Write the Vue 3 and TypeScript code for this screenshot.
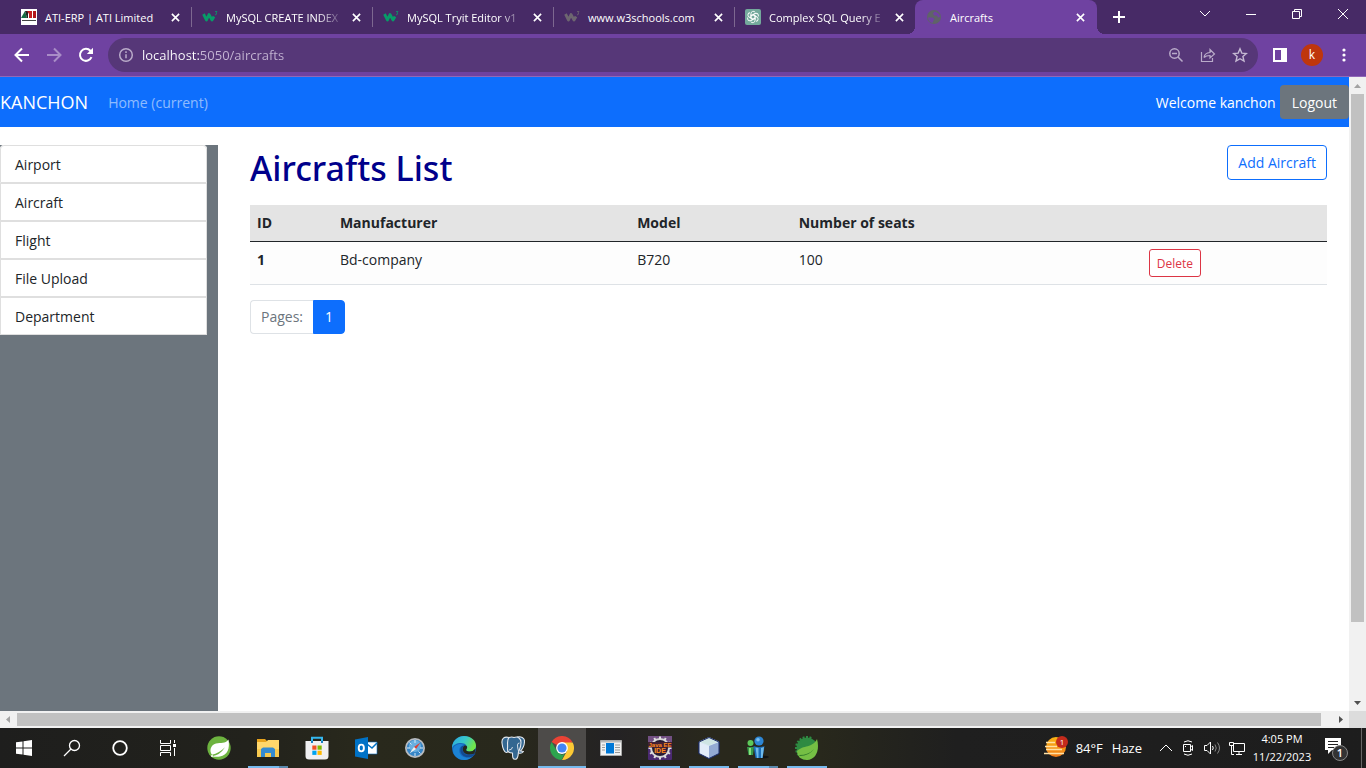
<script setup lang="ts">
import { ref } from 'vue'

interface Tab { title: string; icon: string; fade?: boolean; active?: boolean }
interface Aircraft { id: number; manufacturer: string; model: string; seats: number }
interface App { name: string; state?: string }

const tabs: Tab[] = [
  { title: 'ATI-ERP | ATI Limited', icon: 'ati' },
  { title: 'MySQL CREATE INDEX', icon: 'w3', fade: true },
  { title: 'MySQL Tryit Editor v1', icon: 'w3', fade: true },
  { title: 'www.w3schools.com', icon: 'w3gray' },
  { title: 'Complex SQL Query E', icon: 'gpt', fade: true },
  { title: 'Aircrafts', icon: 'globe', active: true },
]
const address = ref('localhost:5050/aircrafts')
const menu: string[] = ['Airport', 'Aircraft', 'Flight', 'File Upload', 'Department']
const aircrafts: Aircraft[] = [{ id: 1, manufacturer: 'Bd-company', model: 'B720', seats: 100 }]
const apps: App[] = [
  { name: 'spring' },
  { name: 'explorer', state: 'multi' },
  { name: 'store' },
  { name: 'outlook' },
  { name: 'safari' },
  { name: 'edge' },
  { name: 'postgres' },
  { name: 'chrome', state: 'active' },
  { name: 'window' },
  { name: 'javaee', state: 'open' },
  { name: 'netbeans', state: 'open' },
  { name: 'people', state: 'multi' },
  { name: 'sts', state: 'open' },
]
const teeth: number[] = Array.from({ length: 12 }, (_, i) => i * 30)
const fineTeeth: number[] = Array.from({ length: 12 }, (_, i) => 180 + i * 18)
const petals: number[] = [0, 60, 120, 180, 240, 300]
</script>

<template>
  <div class="desktop">
    <header class="tabstrip">
      <div class="tabs" role="tablist">
        <div v-for="(tab, i) in tabs" :key="i" class="tab" :class="{ active: tab.active }" role="tab">
          <svg v-if="tab.icon === 'ati'" class="fav" viewBox="0 0 16 16">
            <rect width="16" height="16" fill="#fff" />
            <path d="M0 9 4 2 6 9z" fill="#146b43" /><path d="M4 2H7V9H6z" fill="#222" />
            <path d="M6 2h5v7H8V5z" fill="#c41d20" /><path d="M12 2h3v7h-3z" fill="#b3161c" />
            <path d="M1 11.500h14" stroke="#444" />
          </svg>
          <svg v-else-if="tab.icon === 'w3' || tab.icon === 'w3gray'" class="fav" :class="tab.icon" viewBox="0 0 16 16">
            <path d="M1.500 5 4.500 11 7 5.500 10 11 12 7.500" fill="none" stroke="currentColor" stroke-width="2.800" stroke-linejoin="round" />
            <path d="M13 2.500h2l-1 1.500q2 1-1 2" fill="none" stroke="currentColor" stroke-width=".8" />
          </svg>
          <svg v-else-if="tab.icon === 'gpt'" class="fav" viewBox="0 0 16 16">
            <rect width="16" height="16" rx="2" fill="#74a99c" />
            <g fill="none" stroke="#fff" stroke-width=".9">
              <path v-for="a in petals" :key="a" :transform="`rotate(${a} 8 8)`" d="M6 9V4.500a2.300 2.300 0 0 1 4.200-1.200M8 5.600l3.500 2" />
            </g>
          </svg>
          <svg v-else class="fav" viewBox="0 0 16 16">
            <circle cx="8" cy="8" r="7" fill="#5f6368" />
            <path d="M2 8.500h4.500l2 1.500-1 1.500-1 2.500Q2.500 13 2 8.500M8.500 2.500 7 4.500 8 6.500h3l1 2 2-.5Q14 4 8.500 2.500" fill="#6f42a1" />
          </svg>
          <span class="title" :class="{ fade: tab.fade }">{{ tab.title }}</span>
          <button class="plain close" aria-label="Close tab">
            <svg width="9" height="9" viewBox="0 0 10 10"><path d="m1 1 8 8M9 1 1 9" stroke="currentColor" stroke-width="1.800" /></svg>
          </button>
        </div>
      </div>
      <button class="plain newtab" aria-label="New tab">
        <svg width="14" height="14" viewBox="0 0 14 14"><path d="M7 1v12M1 7h12" stroke="currentColor" stroke-width="2" /></svg>
      </button>
      <div class="wincontrols">
        <button class="plain" aria-label="Search tabs"><svg width="12" height="12" viewBox="0 0 12 12"><path d="m1 3 5 5 5-5" /></svg></button>
        <button class="plain" aria-label="Minimize"><svg width="12" height="12" viewBox="0 0 12 12"><path d="M1 6.500h10" /></svg></button>
        <button class="plain" aria-label="Restore"><svg width="12" height="12" viewBox="0 0 12 12"><path d="M1.500 3.500h7v7h-7zM3.500 3.500v-2h7v7h-2" /></svg></button>
        <button class="plain" aria-label="Close"><svg width="12" height="12" viewBox="0 0 12 12"><path d="m1 1 10 10M11 1 1 11" /></svg></button>
      </div>
    </header>

    <nav class="toolbar">
      <button class="plain cell" aria-label="Back"><svg width="16" height="16" viewBox="0 0 16 16"><path d="M15 8H2M8 1.500 1.500 8 8 14.500" fill="none" stroke="#fff" stroke-width="2" /></svg></button>
      <button class="plain cell" aria-label="Forward"><svg width="16" height="16" viewBox="0 0 16 16"><path d="M1 8h13M8 1.500 14.500 8 8 14.500" fill="none" stroke="#a98dc7" stroke-width="2" /></svg></button>
      <button class="plain cell" aria-label="Reload"><svg width="16" height="16" viewBox="0 0 16 16"><path d="M13.500 10.200A6 6 0 1 1 12.400 3.800L14 5.500" fill="none" stroke="#fff" stroke-width="2" /><path d="M15 .8V7H8.800z" fill="#fff" /></svg></button>
      <div class="omnibox">
        <svg width="16" height="16" viewBox="0 0 16 16" fill="none" stroke="#b9abc9" stroke-width="1.500"><circle cx="8" cy="8" r="6.300" /><path d="M8 7.200v4M8 4.300V6" /></svg>
        <input v-model="address" class="address" aria-label="Address" />
        <button class="plain cell" aria-label="Zoom"><svg width="16" height="16" viewBox="0 0 16 16" fill="none" stroke="#b9abc9" stroke-width="1.500"><circle cx="6.500" cy="6.500" r="4.700" /><path d="m10 10 4.500 4.500M4 6.500h5" /></svg></button>
        <button class="plain cell" aria-label="Share"><svg width="16" height="16" viewBox="0 0 16 16" fill="none" stroke="#b9abc9" stroke-width="1.200"><path d="M1.500 5v9.500h11V11M4 10.500q.5-4.500 6-5V2.500L14.500 7 10 11V8.500q-4 0-6 2" /></svg></button>
        <button class="plain cell" aria-label="Bookmark"><svg width="16" height="16" viewBox="0 0 16 16" fill="none" stroke="#c6bad3" stroke-width="1.400"><path d="m8 1.800 1.800 4.300 4.600.4-3.500 3 1.100 4.600L8 11.700 4 14.100l1.100-4.600-3.500-3 4.600-.4z" /></svg></button>
      </div>
      <button class="plain cell" aria-label="Side panel"><svg width="16" height="16" viewBox="0 0 16 16"><path d="M1 1h14v14H1zM3 3v10h6V3z" fill="#fff" fill-rule="evenodd" /></svg></button>
      <button class="plain cell" aria-label="Profile"><span class="avatar">k</span></button>
      <button class="plain cell" aria-label="Menu"><svg width="16" height="16" viewBox="0 0 16 16" fill="#fff"><circle cx="8" cy="3" r="1.600" /><circle cx="8" cy="8" r="1.600" /><circle cx="8" cy="13" r="1.600" /></svg></button>
    </nav>

    <div class="viewport">
      <div class="page">
        <nav class="navbar">
          <a href="#" class="brand">KANCHON</a>
          <a href="#" class="home">Home (current)</a>
          <span class="welcome">Welcome kanchon</span>
          <button class="logout">Logout</button>
        </nav>
        <div class="content">
          <aside class="sidebar">
            <div class="menu">
              <a v-for="item in menu" :key="item" href="#">{{ item }}</a>
            </div>
          </aside>
          <main class="main">
            <div class="heading">
              <h1>Aircrafts List</h1>
              <button class="add">Add Aircraft</button>
            </div>
            <table>
              <colgroup><col class="c1" /><col class="c2" /><col class="c3" /><col class="c4" /><col /></colgroup>
              <thead>
                <tr><th>ID</th><th>Manufacturer</th><th>Model</th><th>Number of seats</th><th></th></tr>
              </thead>
              <tbody>
                <tr v-for="a in aircrafts" :key="a.id">
                  <th>{{ a.id }}</th><td>{{ a.manufacturer }}</td><td>{{ a.model }}</td><td>{{ a.seats }}</td>
                  <td><button class="delete">Delete</button></td>
                </tr>
              </tbody>
            </table>
            <div class="pagination">
              <span class="label">Pages:</span><a href="#" class="current">1</a>
            </div>
          </main>
        </div>
      </div>
      <div class="vscroll">
        <svg width="17" height="17" viewBox="0 0 17 17"><path d="M5 11h7L8.500 7z" fill="#a3a3a3" /></svg>
        <div class="track"><div class="thumb"></div></div>
        <svg width="17" height="17" viewBox="0 0 17 17"><path d="M5 7h7l-3.500 4z" fill="#505050" /></svg>
      </div>
      <div class="hscroll">
        <svg width="17" height="17" viewBox="0 0 17 17"><path d="M10 5v7L6 8.500z" fill="#a3a3a3" /></svg>
        <div class="track"><div class="thumb"></div></div>
        <svg width="17" height="17" viewBox="0 0 17 17"><path d="M7 5v7l4-3.500z" fill="#505050" /></svg>
      </div>
      <div class="corner"></div>
    </div>

    <footer class="taskbar">
      <div class="system">
        <button class="plain" aria-label="Start"><svg width="16" height="16" viewBox="0 0 16 16" fill="#fff"><path d="M0 2.300 6.500 1.400V7.500H0zM7.500 1.200 16 0v7.500H7.500zM0 8.500h6.500v6.100L0 13.700zM7.500 8.500H16V16l-8.500-1.200z" /></svg></button>
        <button class="plain" aria-label="Search"><svg width="18" height="18" viewBox="0 0 18 18" fill="none" stroke="#fff" stroke-width="1.300"><circle cx="11.500" cy="6.500" r="5" /><path d="m8 10-7 7" /></svg></button>
        <button class="plain" aria-label="Cortana"><svg width="18" height="18" viewBox="0 0 18 18"><circle cx="9" cy="9" r="6.800" fill="none" stroke="#fff" stroke-width="1.800" /></svg></button>
        <button class="plain" aria-label="Task view"><svg width="18" height="18" viewBox="0 0 18 18" fill="none" stroke="#fff"><path d="M1.500 1v3.500h10V1M1.500 17v-3.500h10V17M1.500 6.500h10v5h-10zM15.500 1v3M15.500 9v8" /><path d="M14 5h3v3h-3z" fill="#fff" stroke="none" /></svg></button>
      </div>
      <div class="apps">
        <button v-for="app in apps" :key="app.name" class="plain app" :class="app.state" :aria-label="app.name">
          <svg width="24" height="24" viewBox="0 0 24 24">
            <g v-if="app.name === 'spring'">
              <circle cx="12" cy="12" r="11.700" fill="#6db33f" />
              <path d="M21.500 3.500C23 13 20.500 19 13 20.500q-4 .7-8-.3 8-1 13-9-6 6-13 7.500C2 15 3.500 9 9 7.500 14 6.500 18 8 21.500 3.500" fill="#fff" /><circle cx="5" cy="20" r="1" fill="#fff" />
            </g>
            <g v-else-if="app.name === 'explorer'">
              <path d="M1 3h8l2 2h12v15H1z" fill="#e8a41d" /><path d="M1 6h9l2-2h11v17H1z" fill="#ffd76b" /><path d="M1 13h22v8H1z" fill="#f7c94f" />
              <path d="M5 21v-8l2-1.500h10l2 1.500v8h-4v-4H9v4z" fill="#348bd1" />
            </g>
            <g v-else-if="app.name === 'store'">
              <path d="M7 7V1.800h10V7" fill="none" stroke="#35b8ef" stroke-width="2" />
              <path d="M.5 5h23v15q0 3.500-3.500 3.500H4Q.5 23.500.5 20z" fill="#f0f0f1" /><path d="M6 5h2v2H6zM16 5h2v2h-2z" fill="#1681c4" />
              <path d="M7.300 9.500h4.200v4.200H7.300z" fill="#f25022" /><path d="M12.500 9.500h4.200v4.200h-4.200z" fill="#7fba00" /><path d="M7.300 14.700h4.200v4.200H7.300z" fill="#00a4ef" /><path d="M12.500 14.700h4.200v4.200h-4.200z" fill="#ffb900" />
            </g>
            <g v-else-if="app.name === 'outlook'">
              <path d="M12 6h11v12H12z" fill="#fff" stroke="#0b6cbd" stroke-width=".6" /><path d="m13 8 5 4 5-5" fill="none" stroke="#0072c6" stroke-width="1.500" />
              <path d="M1 3.500 14 1v22L1 20.500z" fill="#0072c6" /><ellipse cx="7.300" cy="12" rx="2.600" ry="3.400" fill="none" stroke="#fff" stroke-width="1.900" />
            </g>
            <g v-else-if="app.name === 'safari'">
              <circle cx="12" cy="12" r="10" fill="#b9bcc0" /><circle cx="12" cy="12" r="8.300" fill="#3685c6" /><circle cx="12" cy="10" r="6" fill="#69afe0" />
              <path d="M12 4v3M12 17v3M4 12h3M17 12h3M6.500 6.500l2 2M15.500 15.500l2 2" stroke="#d8e9f5" /><path d="m17.500 6.500-4.500 6.500-2-2z" fill="#dd3f32" /><path d="m6.500 17.500 4.500-6.500 2 2z" fill="#f1f1f1" />
            </g>
            <g v-else-if="app.name === 'edge'">
              <defs><linearGradient id="eg" x1="0" y1="0" x2="1" y2=".4"><stop offset="0" stop-color="#2ba7df" /><stop offset=".55" stop-color="#38c8cb" /><stop offset="1" stop-color="#70e64b" /></linearGradient></defs>
              <circle cx="12" cy="12" r="12" fill="#1568bd" />
              <path d="M0 11C1 4 6 0 12 0c7 0 12 4.500 12 9.500 0 4-3 6-6 6-3.500 0-4.500-1.200-3.500-2.500C16 10 13.500 7 9 7 4.500 7 1 9 0 12" fill="url(#eg)" />
              <path d="M9.500 10C5 13 7.500 21 14 21.500c3 .4 6-.6 8-3C19.500 22.500 16 24 12 24 6 24 1 19.500 1 14c0-3.500 3.500-6 8-6q2 0 4 1.500-2-.5-3.500.5" fill="#1c83d5" />
              <path d="M12.500 9.500q-3.500 2-1.500 6c2 4 7 4.500 11.500 2 1-.5 1 0 .5 1-4 4-10 3.500-13 0-3-4-1.500-9 2.500-9" fill="#134a91" />
              <path d="M14.500 13c1.500-2 .5-3.500-2-3.500-2 1.500-2.500 4.500-.5 7 2.500 2.500 7 2.500 10.500 1l1-5q-2.500 3-5.500 3c-3.500 0-4.500-1.200-3.500-2.500" fill="#26281d" />
            </g>
            <g v-else-if="app.name === 'postgres'" fill="#336791" stroke="#e4e9ee" stroke-width="1.100" stroke-linejoin="round">
              <path d="M8 1.500C3 0 .5 3 1 7c.5 5 2.500 10 4.500 9.500 1.500 0 2-2 3-3.500M16 1c4-1 7.500 1 7.500 4 0 4-2 8-4 10l3 .5q-2 2.500-5 1.500" />
              <path d="M8 1.500q3-1 5 0c4-1.500 7 1 7 5 0 5-1.500 7-2.500 9.500-.5 2 0 7-3 7.300-3 .2-3-2.300-3-6.300-3 0-5.500-1-5-5 .5-4-1-8 1.500-10.500" /><path d="M8 14q3 0 3.500-3M17.500 15q-1-3-1-6 0-2 2-2" fill="none" stroke-width=".9" />
            </g>
            <g v-else-if="app.name === 'chrome'">
              <path d="M12 12 1.600 6A12 12 0 0 1 22.400 6z" fill="#ea4335" />
              <path d="M12 6.500h10.700A12 12 0 0 1 12 24l5-9z" fill="#fcc934" /><path d="m7 15 5 4 3-2-3.500 7A12 12 0 0 1 1.600 6z" fill="#2da44e" />
              <circle cx="12" cy="12" r="5.900" fill="#fff" /><circle cx="12" cy="12" r="4.600" fill="#4285f4" />
            </g>
            <g v-else-if="app.name === 'window'">
              <path d="M1.500 4.500h21v15h-21z" fill="#f2f2f2" stroke="#aaa" /><path d="M2 5h20v1.500H2z" fill="#bbb" /><path d="M7 7h8v10.500H7z" fill="#0078d7" />
              <path d="M3 9h3M3 11.500h3M3 14h3M16 9h5M16 11.500h5M16 14h5M16 16.500h5" stroke="#9a9a9a" />
            </g>
            <g v-else-if="app.name === 'javaee'">
              <rect width="24" height="24" rx="1" fill="#4b2a72" /><path d="M0 0h24v9H0z" fill="#725083" />
              <circle cx="12" cy="12" r="9" fill="#251a32" stroke="#d6d6d6" stroke-width="2" />
              <path v-for="t in teeth" :key="t" :transform="`rotate(${t} 12 12)`" d="M11 .5h2V3h-2z" fill="#e0e0e0" />
              <path d="M0 6h24v5.500H0zM6 11h12v6.500H6z" fill="#422034" />
              <text x="12" y="11" text-anchor="middle" class="icontext">Java EE</text><text x="12" y="17" text-anchor="middle" class="icontext large">IDE</text>
            </g>
            <g v-else-if="app.name === 'netbeans'" stroke="#1c2c64" stroke-linejoin="round">
              <path d="m12 1.500 10 4.500v11.500L12 22.500 2 17.500V6z" fill="#a7bfe0" /><path d="m2 6 10-4.500L22 6l-10 4z" fill="#cfe5e4" stroke="#e7f3fa" stroke-width=".7" /><path d="m2 6 10 4v12.500L2 17.500z" fill="#e3edf9" stroke="none" /><path d="m22 6-10 4v12.500l10-5z" fill="#93aad3" stroke="none" /><path d="m12 1.500 10 4.500v11.500L12 22.500 2 17.500V6z" fill="none" />
            </g>
            <g v-else-if="app.name === 'people'">
              <ellipse cx="16" cy="21" rx="7" ry="1.500" fill="#111" /><circle cx="4.500" cy="7" r="3" fill="#5dc95a" /><path d="M1 11h7l-1 8H2.500z" fill="#36994a" /><path d="M4 12v7" stroke="#85e07a" stroke-width="2" />
              <circle cx="13" cy="5" r="4.600" fill="#2d86d5" /><circle cx="12" cy="3.700" r="1.800" fill="#79bff0" /><path d="M7.500 10q5.500 2 11 0l-2 12h-7z" fill="#1b6db9" /><path d="M9.500 11.500 11 22h1.500V12M15 12v10h1.500l1.500-11" fill="#6fb9ea" />
            </g>
            <g v-else>
              <circle cx="12" cy="12" r="10.500" fill="#2e8b42" /><path v-for="t in fineTeeth" :key="t" :transform="`rotate(${t} 12 12)`" d="M11 0h2v3h-2z" fill="#2e8b42" />
              <path d="M22 3C25 14 21 24 12 24 6 24 2 20 2 15 8 9 18 12 22 3" fill="#75bf44" /><path d="M4 19q10 0 15-6-5 7-14 7" fill="#2f7b2b" />
            </g>
          </svg>
        </button>
      </div>
      <div class="tray">
        <div class="weather">
          <svg width="26" height="24" viewBox="0 0 26 24">
            <defs><linearGradient id="sun" x1="0" y1="0" x2="0" y2="1"><stop offset="0" stop-color="#fbb514" /><stop offset="1" stop-color="#ef7a18" /></linearGradient></defs>
            <circle cx="13" cy="11" r="10" fill="url(#sun)" /><path d="M3 6.500h9M2 10.500h12M3 13.500h16M1 17.500h20" stroke="#ffe0a4" stroke-width="1.500" />
            <circle cx="19" cy="6" r="6" fill="#c42b1c" /><text x="19" y="9" text-anchor="middle" class="badge">1</text>
          </svg>
          <span>84°F</span><span class="haze">Haze</span>
        </div>
        <svg width="14" height="14" viewBox="0 0 14 14"><path d="m1 10 6-6 6 6" /></svg>
        <svg width="16" height="16" viewBox="0 0 16 16"><path d="M3.500 4.500h7v7h-7zM10.500 7l2-1.500v5l-2-1.500M4 2q4-2.500 8 0M4 14q4 2.500 8 0M5 6.500h1" /></svg>
        <svg width="18" height="16" viewBox="0 0 18 16"><path d="M1.500 5.500H4L7.500 2v12L4 10.500H1.500zM9.500 6q1.500 2 0 4" /><path d="M12 4.500q2.500 3.500 0 7M14.500 2.500q4 5.500 0 11" stroke="#888" /></svg>
        <svg width="18" height="16" viewBox="0 0 18 16"><path d="M5.500 3.500h11v8h-11zM8 14.500h6M11 11.500v3M1.500 2.500h4v3h-4zM3.500 5.500v9H6" /></svg>
        <time class="clock"><span>4:05 PM</span><span>11/22/2023</span></time>
        <button class="plain notify" aria-label="Notifications">
          <svg width="26" height="26" viewBox="0 0 26 26"><path d="M2 3h16v12H9l-4 4v-4H2z" fill="#fff" stroke="none" /><path d="M5 6.500h10M5 9.500h10M5 12.500h6" stroke="#222" /><circle cx="17" cy="18" r="7.500" fill="#333" stroke="#888" /><text x="17" y="22" text-anchor="middle" class="count">1</text></svg>
        </button>
        <div class="peek"></div>
      </div>
    </footer>
  </div>
</template>

<style>
body { margin: 0; overflow: hidden; }
</style>

<style scoped>
* { box-sizing: border-box; }
.desktop { height: 100vh; display: flex; flex-direction: column; font-family: "Open Sans", "Noto Sans", sans-serif; font-size: 14px; color: #212529; }
a { text-decoration: none; }
button { font-family: inherit; }
.plain { border: 0; padding: 0; background: none; color: #fff; display: flex; align-items: center; justify-content: center; }
.tabstrip { height: 34px; flex: none; display: flex; background: #472a66; color: #fff; padding-left: 10px; }
.tabs { display: flex; }
.tab { width: 181px; display: flex; align-items: center; padding-left: 11px; position: relative; font-size: 11px; }
.tab + .tab:not(.active)::before { content: ""; position: absolute; left: 0; top: 7px; width: 1px; height: 20px; background: #7d6890; }
.tab.active { width: 182px; background: #6f42a1; border-radius: 8px 8px 0 0; }
.tab.active::before, .tab.active::after { content: ""; position: absolute; bottom: 0; width: 8px; height: 8px; }
.tab.active::before { right: 100%; background: radial-gradient(circle at 0 0, #472a66 8px, #6f42a1 8px); }
.tab.active::after { left: 100%; background: radial-gradient(circle at 100% 0, #472a66 8px, #6f42a1 8px); }
.fav { width: 16px; height: 16px; flex: none; }
.w3 { color: #079b68; }
.w3gray { color: #6d6670; }
.title { width: 116px; flex: none; margin-left: 8px; white-space: nowrap; }
.fade { mask-image: linear-gradient(90deg, #000 92px, transparent 118px); }
.close { width: 16px; height: 16px; margin-left: 6px; flex: none; }
.newtab { width: 28px; margin-left: 8px; }
.wincontrols { display: flex; margin-left: auto; }
.wincontrols button { width: 46px; height: 28px; }
.wincontrols path { fill: none; stroke: #fff; }
.toolbar { height: 43px; flex: none; display: flex; align-items: center; background: #6f42a1; border-bottom: 1px solid #9068b8; padding: 0 6px; }
.cell { width: 32px; height: 32px; flex: none; }
.omnibox { flex: 1; height: 34px; margin: 0 6px; padding: 0 2px 0 10px; display: flex; align-items: center; border-radius: 17px; background: #563778; }
.address { flex: 1; min-width: 0; height: 24px; margin-left: 8px; padding: 0; border: 0; outline: 0; font: 13px/24px "Open Sans", sans-serif; color: transparent; background: linear-gradient(90deg, #fff 57px, #c5b6d4 57px); background-clip: text; }
.avatar { width: 22px; height: 22px; border-radius: 50%; background: #bf360c; font-size: 12px; line-height: 21px; text-align: center; }
.viewport { flex: 1; min-height: 0; display: grid; grid-template-columns: 1fr 17px; grid-template-rows: 1fr 17px; }
.page { display: flex; flex-direction: column; min-height: 0; background: #fff; }
.navbar { height: 50px; flex: none; display: flex; align-items: center; background: #0d6efd; color: #fff; }
.brand { color: #fff; font-size: 18px; }
.home { color: rgba(255, 255, 255, .55); margin-left: 20px; }
.welcome { margin-left: auto; margin-right: 4px; }
.logout { border: 0; border-radius: 4px; height: 34px; padding: 0 12px; background: #6c757d; color: #fff; font-size: 14px; }
.content { flex: 1; display: flex; padding-top: 18px; }
.sidebar { width: 218px; flex: none; background: #6c757d; padding-right: 11px; }
.menu { display: flex; flex-direction: column; background: #fff; border-radius: 4px 4px 0 0; overflow: hidden; }
.menu a { height: 38px; padding: 0 14px; line-height: 38px; color: #212529; border: 1px solid #dfdfdf; }
.menu a:first-child { border-radius: 4px 4px 0 0; }
.main { flex: 1; padding: 0 22px 0 32px; }
.heading { display: flex; justify-content: space-between; align-items: flex-start; height: 60px; }
h1 { margin: 0; font-family: "Noto Sans", sans-serif; font-size: 34px; line-height: 46px; font-weight: 500; color: #00008b; }
.add { height: 35px; padding: 0 10px; border: 1px solid #0d6efd; border-radius: 4px; background: #fff; color: #0d6efd; font-size: 14px; }
table { width: 100%; table-layout: fixed; border-collapse: collapse; }
.c1 { width: 7.7%; } .c2 { width: 27.6%; } .c3 { width: 15%; } .c4 { width: 32.5%; }
th, td { text-align: left; vertical-align: top; padding: 7px; line-height: 22px; }
thead th { background: #e4e4e4; border-bottom: 1px solid #212529; }
tbody th, tbody td { background: #fdfdfd; border-bottom: 1px solid #dee2e6; }
.delete { display: block; height: 28px; padding: 0 7px; border: 1px solid #dc3545; border-radius: 3px; background: #fff; color: #dc3545; font-size: 12px; }
.pagination { display: flex; margin-top: 15px; line-height: 32px; }
.label { padding: 0 10px; border: 1px solid #dee2e6; border-right: 0; border-radius: 4px 0 0 4px; color: #6c757d; }
.current { padding: 0 11px; border: 1px solid #0d6efd; border-radius: 0 4px 4px 0; background: #0d6efd; color: #fff; }
.vscroll, .hscroll { display: flex; background: #f1f1f1; }
.vscroll { flex-direction: column; }
.track { flex: 1; }
.vscroll .track { padding: 0 2px; }
.hscroll .track { padding: 2px 0; }
.thumb { background: #c1c1c1; }
.vscroll .thumb { height: 88%; }
.hscroll .thumb { height: 13px; width: 99.2%; }
.corner { background: #dcdcdc; }
.taskbar { height: 40px; flex: none; display: flex; color: #fff; background: linear-gradient(90deg, #1e1e1d, #22221c 18%, #29291c 27%, #28281c 38%, #242224 45%, #29281c 52%, #28281c 60%, #1f1f1f 70%, #1d1d1d); }
.system, .apps { display: flex; }
.system button { width: 48px; }
.apps { margin-left: 3px; gap: 1px; }
.app { width: 48px; position: relative; }
.app.active { background: #4d4b49; }
.app::after { position: absolute; bottom: 0; left: 4px; right: 4px; height: 2px; background: #76b9ed; }
.open::after, .multi::after, .active::after { content: ""; }
.app.active::after { left: 0; right: 0; }
.multi::after { background: linear-gradient(90deg, #76b9ed 31px, #5a89ad 31px); }
.icontext { font: bold 6px "Liberation Sans", sans-serif; fill: #ff8a1c; }
.large { font-size: 7px; }
.tray { margin-left: auto; display: flex; align-items: center; gap: 7px; }
.tray > svg { fill: none; stroke: #fff; }
.weather { display: flex; align-items: center; font-size: 13px; gap: 7px; margin-right: 10px; }
.haze { margin-left: 2px; }
.badge { font-size: 8px; fill: #fff; }
.clock { display: flex; flex-direction: column; align-items: center; font-size: 11px; line-height: 18px; width: 58px; white-space: nowrap; }
.notify { width: 36px; height: 40px; }
.count { font-size: 11px; fill: #fff; font-weight: 600; }
.peek { width: 5px; height: 40px; border-left: 1px solid #666; }
</style>
